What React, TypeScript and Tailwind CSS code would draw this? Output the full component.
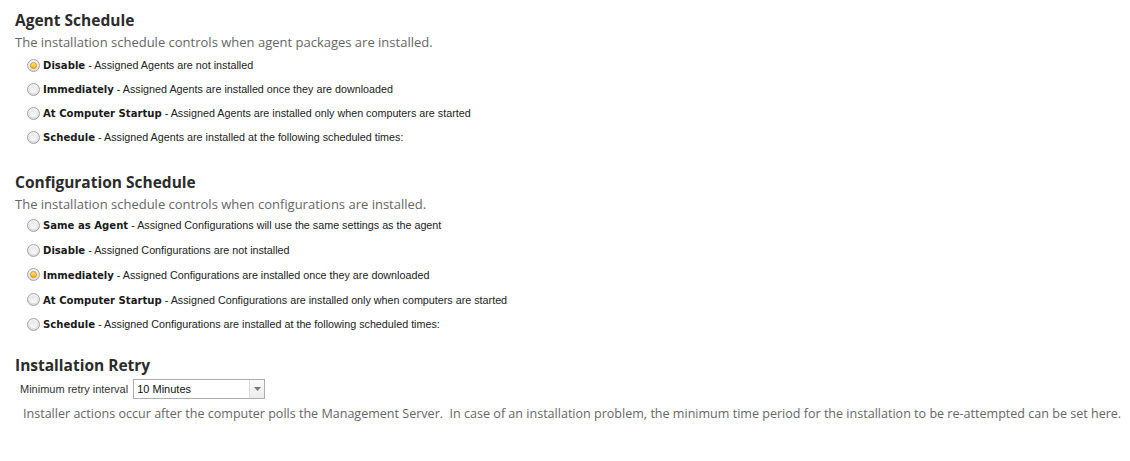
import React from "react";

function Radio({ checked }: { checked?: boolean }) {
  return (
    <span className="relative inline-flex h-[13px] w-[13px] shrink-0 items-center justify-center rounded-full border border-[#a3a3a3] bg-gradient-to-b from-[#f4f4f4] to-[#dcdcdc]">
      {checked ? (
        <span className="h-[7px] w-[7px] rounded-full border border-[#d89a10] bg-gradient-to-b from-[#ffe57a] to-[#f4b400]" />
      ) : (
        <span className="h-[7px] w-[7px] rounded-full bg-gradient-to-b from-[#e6e6e6] to-[#fafafa]" />
      )}
    </span>
  );
}

function Option({ label, text, checked, h }: { label: string; text: string; checked?: boolean; h: string }) {
  return (
    <div className={`flex items-center pl-[12px] ${h}`}>
      <Radio checked={checked} />
      <span className="ml-[3px] text-[10.75px] text-[#222] font-['Liberation_Sans',sans-serif] whitespace-pre">
        <span className="font-bold font-['DejaVu_Sans',sans-serif] text-[10.1px] text-[#1a1a1a]">{label}</span>
        {" - " + text}
      </span>
    </div>
  );
}

export default function App() {
  const heading = "text-[15.5px] font-bold text-[#2b2b2b] font-['Open_Sans',sans-serif] leading-[20px]";
  const desc = "text-[13px] text-[#666] font-['Open_Sans',sans-serif] leading-[18px]";
  return (
    <div className="h-[461px] w-[1130px] bg-white pl-[15px] pt-[10px]">
      <div className={heading}>Agent Schedule</div>
      <div className={`${desc} mt-[3px]`}>The installation schedule controls when agent packages are installed.</div>
      <div className="mt-[2px]">
        <Option h="h-[24px]" checked label="Disable" text="Assigned Agents are not installed" />
        <Option h="h-[24px]" label="Immediately" text="Assigned Agents are installed once they are downloaded" />
        <Option h="h-[24px]" label="At Computer Startup" text="Assigned Agents are installed only when computers are started" />
        <Option h="h-[24px]" label="Schedule" text="Assigned Agents are installed at the following scheduled times:" />
      </div>
      <div className={`${heading} mt-[23px]`}>Configuration Schedule</div>
      <div className={`${desc} mt-[3px]`}>The installation schedule controls when configurations are installed.</div>
      <div className="mt-0">
        <Option h="h-[24.75px]" label="Same as Agent" text="Assigned Configurations will use the same settings as the agent" />
        <Option h="h-[24.75px]" label="Disable" text="Assigned Configurations are not installed" />
        <Option h="h-[24.75px]" checked label="Immediately" text="Assigned Configurations are installed once they are downloaded" />
        <Option h="h-[24.75px]" label="At Computer Startup" text="Assigned Configurations are installed only when computers are started" />
        <Option h="h-[24.75px]" label="Schedule" text="Assigned Configurations are installed at the following scheduled times:" />
      </div>
      <div className={`${heading} mt-[18px]`}>Installation Retry</div>
      <div className="mt-[4px] flex items-center pl-[5px]">
        <span className="text-[11px] text-[#333] font-['Liberation_Sans',sans-serif]">Minimum retry interval</span>
        <div className="ml-[5px] flex h-[20px] w-[132px] items-stretch border border-[#abadb3] bg-white">
          <span className="flex flex-1 items-center pl-[3px] text-[11px] text-[#111] font-['Liberation_Sans',sans-serif]">10 Minutes</span>
          <span className="flex w-[15px] items-center justify-center border-l border-[#dcdcdc] bg-gradient-to-b from-[#fafafa] to-[#ececec]">
            <svg width="7" height="4" viewBox="0 0 7 4"><path d="M0 0H7L3.5 4Z" fill="#777" /></svg>
          </span>
        </div>
      </div>
      <div className="mt-[6px] pl-[8px] whitespace-pre text-[12.55px] text-[#666] font-['Open_Sans',sans-serif] leading-[18px]">
        Installer actions occur after the computer polls the Management Server.  In case of an installation problem, the minimum time period for the installation to be re-attempted can be set here.
      </div>
    </div>
  );
}
